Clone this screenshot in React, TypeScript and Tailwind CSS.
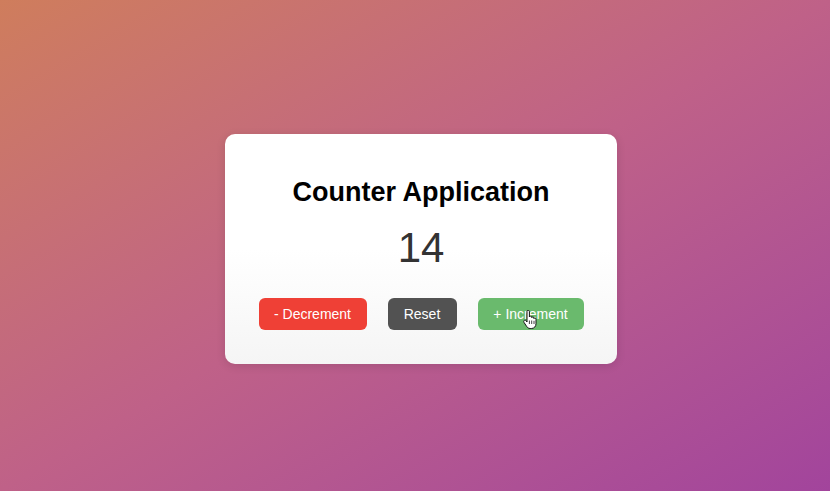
import { useState } from "react"

function HandCursor() {
  return (
    <svg
      className="pointer-events-none absolute left-[45px] top-[12px]"
      width="14"
      height="19"
      viewBox="0 0 14 19"
    >
      <path
        d="M4 1.5c0-.8.6-1.3 1.2-1.3s1.2.5 1.2 1.3V7c.2-.6.7-.9 1.2-.9.6 0 1.1.4 1.1 1.1v.5c.2-.5.6-.8 1.1-.8.6 0 1.1.4 1.1 1.1v.6c.2-.4.6-.6 1-.6.6 0 1.1.5 1.1 1.2v4.5c0 2.7-1.8 4.8-4.6 4.8H7.2c-1.7 0-2.6-.8-3.5-2L1 12.4c-.5-.8-.3-1.6.3-2 .6-.4 1.3-.2 1.8.4L4 12V1.5z"
        fill="#fff"
        stroke="#111"
        strokeWidth="1"
        strokeLinejoin="round"
      />
      <path d="M6.4 10.5v3.5M8.7 10.5v3.5M11 10.8v3.2" stroke="#111" strokeWidth="0.8" />
    </svg>
  )
}

export default function App() {
  const [count, setCount] = useState(14)

  return (
    <div className="flex h-[491px] w-[830px] items-center justify-center bg-linear-to-br from-[#cf7d5c] via-[#bf6188] to-[#a2449c] pl-[12px] pt-[7px] font-['Liberation_Sans',Arial,sans-serif]">
      <div className="flex w-[392px] flex-col items-center rounded-[10px] bg-linear-to-b from-white via-white to-[#f5f5f5] pb-[34px] pt-[42px] shadow-[0_2px_10px_rgba(0,0,0,0.12)]">
        <h1 className="text-[27px] font-bold leading-[32px] text-black">Counter Application</h1>
        <div className="mt-[15px] text-[42px] leading-[50px] text-[#333]">{count}</div>
        <div className="mt-[25px] flex gap-[21px]">
          <button
            onClick={() => setCount(count - 1)}
            className="h-[32px] w-[108px] rounded-[6px] bg-[#ef4036] text-[14px] text-white"
          >
            - Decrement
          </button>
          <button
            onClick={() => setCount(0)}
            className="h-[32px] w-[69px] rounded-[6px] bg-[#525252] text-[14px] text-white"
          >
            Reset
          </button>
          <button
            onClick={() => setCount(count + 1)}
            className="relative h-[32px] w-[106px] rounded-[6px] bg-[#6aba6d] text-[14px] text-white"
          >
            + Increment
            <HandCursor />
          </button>
        </div>
      </div>
    </div>
  )
}
